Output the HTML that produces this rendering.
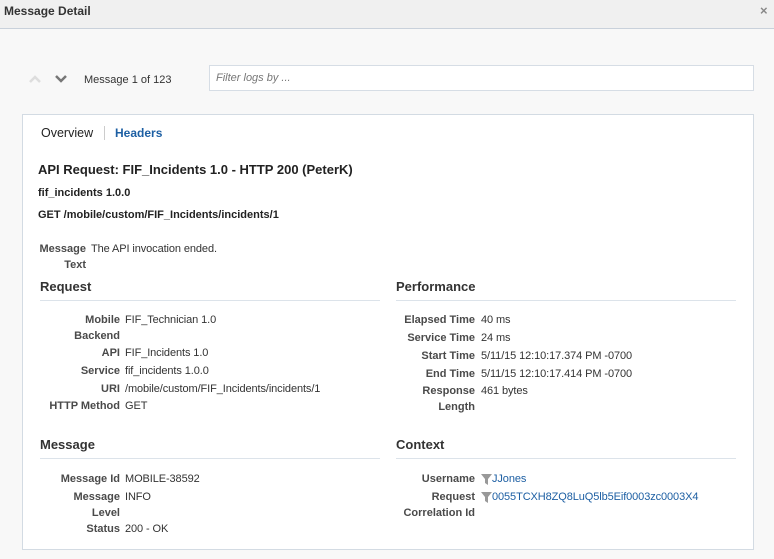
<!DOCTYPE html>
<html><head><style>
body{margin:0;width:774px;height:559px;background:#f8f8f8;font-family:"Liberation Sans",Arial,sans-serif;color:#333;position:relative;overflow:hidden}
.a{position:absolute;white-space:nowrap;font-size:11px;line-height:14px}
.hd{position:absolute;left:0;top:0;width:774px;height:28px;background:#f0f0f0;border-bottom:1px solid #c9d1db}
.lbl{position:absolute;font-size:11px;line-height:16px;font-weight:bold;color:#4a4a4a;text-align:right}
.val{position:absolute;font-size:11px;line-height:16px;color:#333;white-space:nowrap;letter-spacing:-0.1px}
.h{position:absolute;font-size:13px;font-weight:bold;color:#333}
.ln{position:absolute;height:1px;background:#dce3ea}
.lk{color:#1d5fa3}
</style></head><body>
<div class="hd"></div>
<div class="a" style="left:4px;top:4px;font-size:12px;font-weight:bold;color:#333">Message Detail</div>
<div class="a" style="left:760px;top:4px;font-size:13px;font-weight:bold;color:#888">×</div>
<svg style="position:absolute;left:28px;top:74px" width="14" height="10"><path d="M2 8 L7 3 L12 8" stroke="#ddd" stroke-width="2.5" fill="none"/></svg>
<svg style="position:absolute;left:54px;top:74px" width="14" height="10"><path d="M2 2 L7 7 L12 2" stroke="#777" stroke-width="2.5" fill="none"/></svg>
<div class="a" style="left:84px;top:73px;color:#333">Message 1 of 123</div>
<div style="position:absolute;left:209px;top:65px;width:543px;height:24px;background:#fff;border:1px solid #d6dde5"></div>
<div class="a" style="left:216px;top:71px;font-style:italic;color:#777">Filter logs by ...</div>
<div style="position:absolute;left:22px;top:114px;width:730px;height:434px;background:#fff;border:1px solid #d3dbe3"></div>
<div class="a" style="left:41px;top:126px;font-size:12.5px;color:#222">Overview</div>
<div style="position:absolute;left:104px;top:126px;width:1px;height:14px;background:#ccc"></div>
<div class="a" style="left:115px;top:126px;font-size:12px;font-weight:bold;color:#1d5fa3">Headers</div>
<div class="a" style="left:38px;top:162px;font-size:13px;line-height:16px;font-weight:bold;color:#222">API Request: FIF_Incidents 1.0 - HTTP 200 (PeterK)</div>
<div class="a" style="left:38px;top:186px;font-weight:bold;color:#222">fif_incidents 1.0.0</div>
<div class="a" style="left:38px;top:208px;font-weight:bold;color:#222">GET /mobile/custom/FIF_Incidents/incidents/1</div>
<div class="lbl" style="left:20px;width:66px;top:241px">Message<br>Text</div>
<div class="val" style="left:91px;top:241px">The API invocation ended.</div>

<div class="h" style="left:40px;top:279px">Request</div><div class="ln" style="left:40px;top:300px;width:340px"></div>
<div class="lbl" style="left:20px;width:100px;top:312px">Mobile<br>Backend</div><div class="val" style="left:125px;top:312px">FIF_Technician 1.0</div>
<div class="lbl" style="left:20px;width:100px;top:345px">API</div><div class="val" style="left:125px;top:345px">FIF_Incidents 1.0</div>
<div class="lbl" style="left:20px;width:100px;top:363px">Service</div><div class="val" style="left:125px;top:363px">fif_incidents 1.0.0</div>
<div class="lbl" style="left:20px;width:100px;top:381px">URI</div><div class="val" style="left:125px;top:381px">/mobile/custom/FIF_Incidents/incidents/1</div>
<div class="lbl" style="left:20px;width:100px;top:398px">HTTP Method</div><div class="val" style="left:125px;top:398px">GET</div>

<div class="h" style="left:396px;top:279px">Performance</div><div class="ln" style="left:396px;top:300px;width:340px"></div>
<div class="lbl" style="left:375px;width:100px;top:312px">Elapsed Time</div><div class="val" style="left:481px;top:312px">40 ms</div>
<div class="lbl" style="left:375px;width:100px;top:330px">Service Time</div><div class="val" style="left:481px;top:330px">24 ms</div>
<div class="lbl" style="left:375px;width:100px;top:348px">Start Time</div><div class="val" style="left:481px;top:348px">5/11/15 12:10:17.374 PM -0700</div>
<div class="lbl" style="left:375px;width:100px;top:366px">End Time</div><div class="val" style="left:481px;top:366px">5/11/15 12:10:17.414 PM -0700</div>
<div class="lbl" style="left:375px;width:100px;top:383px">Response<br>Length</div><div class="val" style="left:481px;top:383px">461 bytes</div>

<div class="h" style="left:40px;top:437px">Message</div><div class="ln" style="left:40px;top:458px;width:340px"></div>
<div class="lbl" style="left:20px;width:100px;top:471px">Message Id</div><div class="val" style="left:125px;top:471px">MOBILE-38592</div>
<div class="lbl" style="left:20px;width:100px;top:489px">Message<br>Level</div><div class="val" style="left:125px;top:489px">INFO</div>
<div class="lbl" style="left:20px;width:100px;top:521px">Status</div><div class="val" style="left:125px;top:521px">200 - OK</div>

<div class="h" style="left:396px;top:437px">Context</div><div class="ln" style="left:396px;top:458px;width:340px"></div>
<div class="lbl" style="left:375px;width:100px;top:471px">Username</div>
<svg style="position:absolute;left:481px;top:474px" width="11" height="11"><path d="M0 0H11L7 5V11L4 9V5Z" fill="#999"/></svg>
<div class="val lk" style="left:492px;top:471px">JJones</div>
<div class="lbl" style="left:375px;width:100px;top:489px">Request<br>Correlation Id</div>
<svg style="position:absolute;left:481px;top:492px" width="11" height="11"><path d="M0 0H11L7 5V11L4 9V5Z" fill="#999"/></svg>
<div class="val lk" style="left:492px;top:489px">0055TCXH8ZQ8LuQ5lb5Eif0003zc0003X4</div>
</body></html>
